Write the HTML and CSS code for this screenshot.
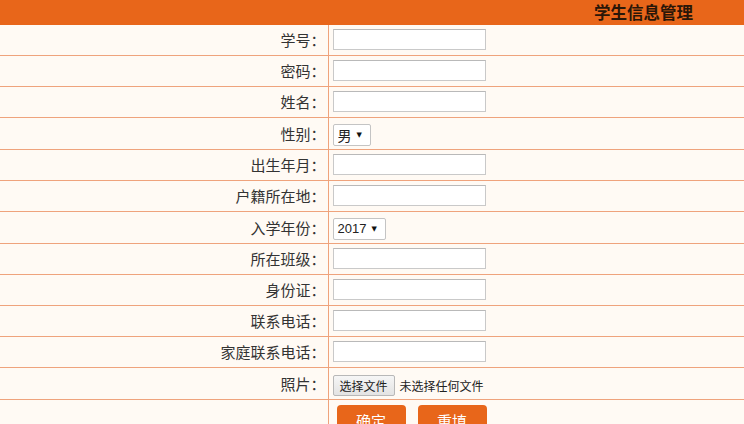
FILE: index.html
```html
<!DOCTYPE html>
<html lang="zh-CN">
<head>
<meta charset="utf-8">
<title>学生信息管理</title>
<link rel="stylesheet" href="styles.css">
</head>
<body>
<form class="form">
<table class="grid">
  <colgroup><col class="c1"><col class="c2"></colgroup>
  <tr class="head"><th colspan="2" class="title">学生信息管理</th></tr>
  <tr class="first"><td class="lbl">学号：</td><td class="fld"><input class="txt" type="text"></td></tr>
  <tr><td class="lbl">密码：</td><td class="fld"><input class="txt" type="password"></td></tr>
  <tr><td class="lbl">姓名：</td><td class="fld"><input class="txt" type="text"></td></tr>
  <tr class="tall"><td class="lbl">性别：</td><td class="fld"><span class="sel sel-sex">男 <i class="tri">▼</i></span></td></tr>
  <tr><td class="lbl">出生年月：</td><td class="fld"><input class="txt" type="text"></td></tr>
  <tr><td class="lbl">户籍所在地：</td><td class="fld"><input class="txt" type="text"></td></tr>
  <tr class="tall"><td class="lbl">入学年份：</td><td class="fld"><span class="sel sel-year">2017 <i class="tri">▼</i></span></td></tr>
  <tr><td class="lbl">所在班级：</td><td class="fld"><input class="txt" type="text"></td></tr>
  <tr><td class="lbl">身份证：</td><td class="fld"><input class="txt" type="text"></td></tr>
  <tr><td class="lbl">联系电话：</td><td class="fld"><input class="txt" type="text"></td></tr>
  <tr><td class="lbl">家庭联系电话：</td><td class="fld"><input class="txt" type="text"></td></tr>
  <tr class="tall"><td class="lbl">照片：</td><td class="fld"><span class="filebtn">选择文件</span><span class="nofile">未选择任何文件</span></td></tr>
  <tr class="last"><td class="lbl"></td><td class="fld btns"><span class="btn">确定</span><span class="btn">重填</span></td></tr>
</table>
</form>
</body>
</html>
```
FILE: styles.css
```css
html, body {
  margin: 0;
  padding: 0;
  background: #fffaf4;
  font-family: "Noto Sans CJK SC", "Liberation Sans", sans-serif;
  color: #333;
  overflow: hidden;
}
.form { margin: 0; }
.grid {
  width: 744px;
  border-collapse: collapse;
  table-layout: fixed;
}
.c1 { width: 328px; }
.grid td, .grid th { padding: 0; }
.head th {
  height: 25px;
  background: #e8661a;
  text-align: right;
  padding-right: 51px;
  font-size: 16.5px;
  font-weight: bold;
  color: #2a1608;
  line-height: 25px;
}
.grid tr { height: 31px; border-bottom: 1px solid #efa37c; }
.grid tr.first { height: 30px; }
.grid tr.tall { height: 32px; }
.grid tr.head { height: 25px; border-bottom: 0; }
.lbl {
  text-align: right;
  padding-right: 2px !important;
  font-size: 15px;
  color: #333;
  border-right: 1px solid #efa37c;
}
.fld { padding-left: 4px !important; }
.txt {
  display: block;
  box-sizing: border-box;
  width: 153px;
  height: 21px;
  margin: 0;
  border: 1px solid #c9c9c9;
  border-top-color: #b9b9b9;
  background: #fff;
  padding: 0;
}
.sel {
  display: inline-flex;
  align-items: center;
  box-sizing: border-box;
  height: 22px;
  border: 1px solid #c4c4c4;
  border-radius: 2px;
  background: #fff;
  padding: 0 8px 0 4px;
  font-size: 13px;
  color: #222;
  font-family: "Liberation Sans", "Noto Sans CJK SC", sans-serif;
  vertical-align: middle;
}
.sel-sex { font-family: "Noto Sans CJK SC", sans-serif; font-size: 14px; }
.tri {
  font-style: normal;
  font-family: "DejaVu Sans", sans-serif;
  font-size: 7px;
  margin-left: 5px;
  color: #111;
}
.filebtn {
  display: inline-block;
  box-sizing: border-box;
  height: 21px;
  line-height: 19px;
  padding: 0 6px;
  border: 1px solid #b8b8b8;
  border-radius: 2px;
  background: linear-gradient(#f6f6f6, #e3e3e3);
  font-size: 12px;
  color: #222;
  vertical-align: middle;
}
.nofile {
  font-size: 12px;
  color: #222;
  margin-left: 5px;
  vertical-align: middle;
}
.btns { padding-left: 8px !important; vertical-align: top; padding-top: 5px !important; }
.btn {
  display: inline-block;
  width: 69px;
  height: 32px;
  line-height: 32px;
  border-radius: 4px;
  background: #e8661a;
  color: #fff;
  font-size: 15px;
  text-align: center;
  margin-right: 12px;
}
.grid tr.last { border-bottom: 0; }
```
